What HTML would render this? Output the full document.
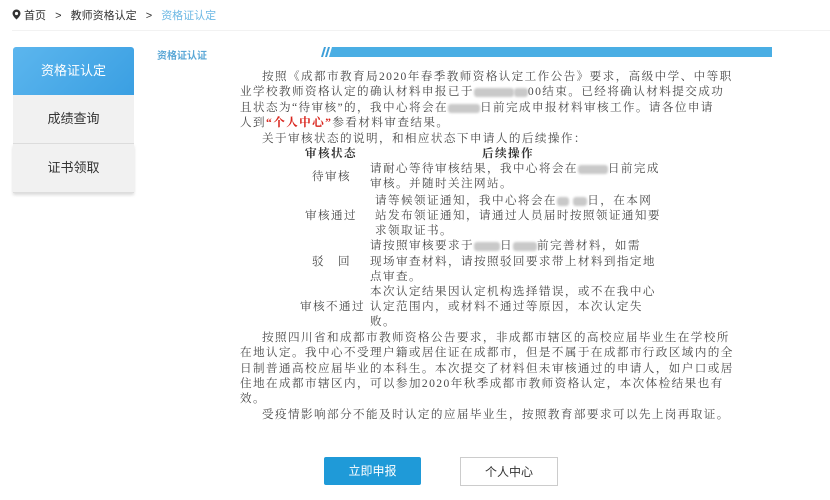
<!DOCTYPE html>
<html><head><meta charset="utf-8"><style>
body{margin:0;width:830px;height:500px;background:#fff;position:relative;overflow:hidden;font-family:"Liberation Sans","Noto Sans CJK SC",sans-serif}
.a{position:absolute;white-space:nowrap}
.crumb{top:7px;font-size:11px;color:#333}
.t{font-family:"Liberation Serif","Noto Serif CJK SC",serif;font-size:11.6px;color:#4a4a4a;letter-spacing:1.4px;line-height:15px}
.bl{display:inline-block;background:#c9c9c9;height:9px;vertical-align:middle;border-radius:3px;filter:blur(1px)}
.side{left:13px;width:121px;height:48px;font-size:13px;text-align:center;line-height:48px;color:#333;background:#f1f1f1;border-bottom:1px solid #ddd}
.btn{top:457px;width:97px;height:28px;line-height:28px;text-align:center;font-size:12px}
</style></head><body>
<div class="a crumb" style="left:12px">
<svg width="9" height="11" viewBox="0 0 9 11" style="vertical-align:-1px"><path d="M4.5 0.5a4 4 0 0 1 4 4c0 2.5-4 6-4 6s-4-3.5-4-6a4 4 0 0 1 4-4z" fill="#333"/><circle cx="4.5" cy="4.5" r="1.6" fill="#fff"/></svg>
首页 <span style="margin:0 6px">&gt;</span> 教师资格认定 <span style="margin:0 6px">&gt;</span> <span style="color:#6cb8e4">资格证认定</span></div>
<div class="a" style="left:12px;top:30px;width:818px;height:1px;background:#f2f2f2"></div>

<div class="a side" style="top:47px;background:linear-gradient(135deg,#5cb6ee,#3a9fe2);color:#fff;border-radius:3px 3px 0 0;border:none">资格证认定</div>
<div class="a side" style="top:95px">成绩查询</div>
<div class="a side" style="top:144px;box-shadow:0 2px 3px rgba(0,0,0,.15)">证书领取</div>

<div class="a" style="left:157px;top:47px;font-size:10px;color:#5aa7d6;font-weight:bold">资格证认证</div>
<svg class="a" style="left:316px;top:46px" width="456" height="12"><polygon points="5,11 8,1 10,1 7,11" fill="#3d9fd9"/><polygon points="9,11 12,1 14,1 11,11" fill="#3d9fd9"/><polygon points="13,11 16,1 456,1 456,11" fill="#4aaee4"/></svg>

<div class="a t" style="left:262px;top:69px">按照《成都市教育局2020年春季教师资格认定工作公告》要求，高级中学、中等职</div>
<div class="a t" style="left:240px;top:84px">业学校教师资格认定的确认材料申报已于<span class="bl" style="width:40px"></span><span class="bl" style="width:14px"></span>00结束。已经将确认材料提交成功</div>
<div class="a t" style="left:240px;top:100px">且状态为“待审核”的，我中心将会在<span class="bl" style="width:32px"></span>日前完成申报材料审核工作。请各位申请</div>
<div class="a t" style="left:240px;top:115px">人到<b style="color:#d9241c">“个人中心”</b>参看材料审查结果。</div>
<div class="a t" style="left:262px;top:131px">关于审核状态的说明，和相应状态下申请人的后续操作：</div>
<div class="a t" style="left:305px;top:146px;font-weight:bold;color:#333">审核状态</div>
<div class="a t" style="left:482px;top:146px;font-weight:bold;color:#333">后续操作</div>
<div class="a t" style="left:312px;top:169px">待审核</div>
<div class="a t" style="left:370px;top:161px">请耐心等待审核结果，我中心将会在<span class="bl" style="width:30px"></span>日前完成</div>
<div class="a t" style="left:370px;top:176px">审核。并随时关注网站。</div>
<div class="a t" style="left:375px;top:193px">请等候领证通知，我中心将会在<span class="bl" style="width:12px"></span> <span class="bl" style="width:14px"></span>日，在本网</div>
<div class="a t" style="left:305px;top:208px">审核通过</div>
<div class="a t" style="left:375px;top:208px">站发布领证通知，请通过人员届时按照领证通知要</div>
<div class="a t" style="left:375px;top:223px">求领取证书。</div>
<div class="a t" style="left:370px;top:238px">请按照审核要求于<span class="bl" style="width:26px"></span>日<span class="bl" style="width:24px"></span>前完善材料，如需</div>
<div class="a t" style="left:312px;top:254px">驳　回</div>
<div class="a t" style="left:370px;top:254px">现场审查材料，请按照驳回要求带上材料到指定地</div>
<div class="a t" style="left:370px;top:269px">点审查。</div>
<div class="a t" style="left:370px;top:284px">本次认定结果因认定机构选择错误，或不在我中心</div>
<div class="a t" style="left:300px;top:299px">审核不通过</div>
<div class="a t" style="left:370px;top:299px">认定范围内，或材料不通过等原因，本次认定失</div>
<div class="a t" style="left:370px;top:314px">败。</div>
<div class="a t" style="left:262px;top:330px">按照四川省和成都市教师资格公告要求，非成都市辖区的高校应届毕业生在学校所</div>
<div class="a t" style="left:240px;top:345px">在地认定。我中心不受理户籍或居住证在成都市，但是不属于在成都市行政区域内的全</div>
<div class="a t" style="left:240px;top:361px">日制普通高校应届毕业的本科生。本次提交了材料但未审核通过的申请人，如户口或居</div>
<div class="a t" style="left:240px;top:376px">住地在成都市辖区内，可以参加2020年秋季成都市教师资格认定，本次体检结果也有</div>
<div class="a t" style="left:240px;top:391px">效。</div>
<div class="a t" style="left:262px;top:407px">受疫情影响部分不能及时认定的应届毕业生，按照教育部要求可以先上岗再取证。</div>

<div class="a btn" style="left:324px;background:#1f9ad8;color:#fff;border-radius:2px">立即申报</div>
<div class="a btn" style="left:460px;border:1px solid #ccc;color:#333;width:96px;height:27px">个人中心</div>
</body></html>
